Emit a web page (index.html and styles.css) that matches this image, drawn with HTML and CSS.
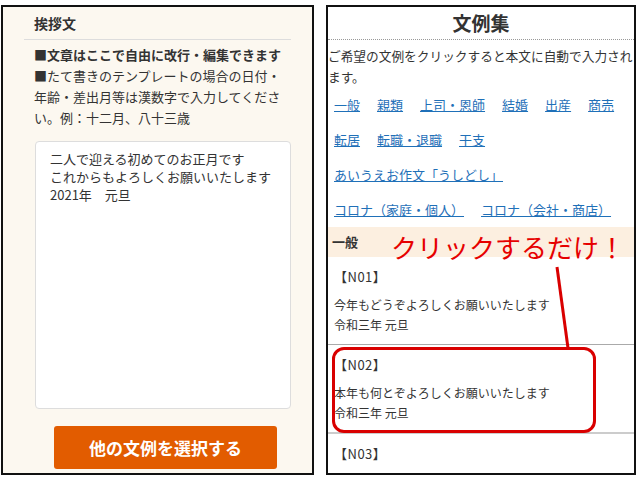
FILE: index.html
```html
<!DOCTYPE html>
<html lang="ja">
<head>
  <meta charset="UTF-8">
  <meta name="viewport" content="width=device-width, initial-scale=1.0">
  <title>挨拶文と文例集</title>
  <link rel="stylesheet" href="styles.css">
</head>
<body>
  <div class="editor">
    <h2 class="editor-title">挨拶文</h2>
    <div class="notes">
      <p class="note-strong">■文章はここで自由に改行・編集できます</p>
      <p>■たて書きのテンプレートの場合の日付・年齢・差出月等は漢数字で入力してください。例：十二月、八十三歳</p>
    </div>
    <div class="message">二人で迎える初めてのお正月です<br>これからもよろしくお願いいたします<br>2021年　元旦</div>
    <button class="pick-btn">他の文例を選択する</button>
  </div>

  <div class="samples">
    <h2 class="samples-title">文例集</h2>
    <div class="samples-body">
      <p class="intro">ご希望の文例をクリックすると本文に自動で入力されます。</p>
      <div class="cat-row"><a href="#">一般</a><a href="#">親類</a><a href="#">上司・恩師</a><a href="#">結婚</a><a href="#">出産</a><a href="#">商売</a></div>
      <div class="cat-row"><a href="#">転居</a><a href="#">転職・退職</a><a href="#">干支</a></div>
      <div class="cat-row"><a href="#">あいうえお作文「うしどし」</a></div>
      <div class="cat-row"><a href="#">コロナ（家庭・個人）</a><a href="#">コロナ（会社・商店）</a></div>

      <div class="section-head">一般</div>
      <div class="sample">
        <div class="sample-no">【N01】</div>
        <p class="sample-text">今年もどうぞよろしくお願いいたします<br>令和三年 元旦</p>
      </div>
      <div class="sample sample-alt">
        <div class="sample-no">【N02】</div>
        <p class="sample-text">本年も何とぞよろしくお願いいたします<br>令和三年 元旦</p>
      </div>
      <div class="sample">
        <div class="sample-no">【N03】</div>
      </div>
    </div>

    <!-- 注釈 -->
    <svg class="callout-line" width="310" height="470"><line x1="229" y1="260" x2="240" y2="341" stroke="#d90000" stroke-width="3"/></svg>
    <div class="callout-box"></div>
    <div class="callout-label">クリックするだけ！</div>
  </div>
</body>
</html>
```

FILE: styles.css
```css
body { margin: 0; padding: 5px 0 0 1px; display: flex; gap: 12px; background: #fff; font-family: "Noto Sans CJK JP", sans-serif; color: #333; }
p { margin: 0; }

.editor { width: 313px; height: 470px; box-sizing: border-box; border: 2px solid #111; background: #fcf8f0; }
.editor-title { margin: 0 21px; padding-left: 10px; height: 32px; line-height: 32px; font-size: 14px; font-weight: bold; border-bottom: 1px solid #ddd; }
.notes { padding: 4px 25px 0 31px; font-size: 13px; line-height: 21px; }
.note-strong { font-weight: bold; }
.message { margin: 13px 0 0 32px; width: 256px; height: 268px; box-sizing: border-box; padding: 8px 14px; background: #fff; border: 1px solid #ddd; border-radius: 4px; font-size: 13px; line-height: 18px; }
.pick-btn { display: block; margin: 17px 0 0 51px; width: 223px; height: 43px; border: none; border-radius: 3px; background: #e25c00; color: #fff; font-family: inherit; font-size: 17px; font-weight: bold; }

.samples { position: relative; width: 310px; height: 470px; box-sizing: border-box; border: 2px solid #111; overflow: hidden; }
.samples-title { margin: 0; height: 32px; line-height: 32px; text-align: center; font-size: 19px; font-weight: bold; border-bottom: 1px dotted #999; }
.samples-body { width: 310px; }
.intro { padding: 5px 0 0 0; font-size: 12.7px; line-height: 21px; }
.cat-row { display: flex; gap: 17px; height: 35px; align-items: center; padding-left: 6px; font-size: 13px; }
.cat-row a { color: #1f70b8; text-decoration: underline; }
.section-head { height: 30px; line-height: 30px; padding-left: 4px; background: #fcefe0; font-size: 13px; font-weight: bold; }
.sample { padding: 10px 0 9px 6px; border-bottom: 1px solid #aaa; }
.sample-alt { border-bottom: 2px solid #ccc; }
.sample-no { font-size: 13px; line-height: 20px; letter-spacing: 0.5px; }
.sample-text { margin-top: 8px; font-size: 12px; line-height: 20px; }

.callout-line { position: absolute; left: 0; top: 0; }
.callout-box { position: absolute; left: 4px; top: 340px; width: 264px; height: 86px; box-sizing: border-box; border: 3px solid #d90000; border-radius: 12px; }
.callout-label { position: absolute; left: 63px; top: 225px; font-size: 26px; line-height: 30px; color: #e60000; white-space: nowrap; }
```
